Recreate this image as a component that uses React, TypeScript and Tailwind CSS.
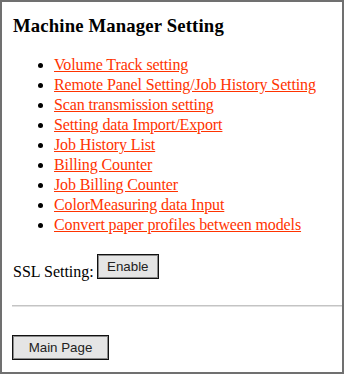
import React from "react";

const links = [
  "Volume Track setting",
  "Remote Panel Setting/Job History Setting",
  "Scan transmission setting",
  "Setting data Import/Export",
  "Job History List",
  "Billing Counter",
  "Job Billing Counter",
  "ColorMeasuring data Input",
  "Convert paper profiles between models",
];

export default function App() {
  return (
    <div
      className="w-[344px] h-[374px] border-2 border-[#707070] bg-white overflow-hidden"
      style={{ fontFamily: '"Liberation Serif", "Times New Roman", serif' }}
    >
      <div className="pl-[10px] pt-[13px]">
        <h3 className="text-[18.72px] leading-[22px] font-bold text-black pl-[1px] tracking-[0.15px]">
          Machine Manager Setting
        </h3>
        <ul className="mt-[18px] pl-[42px] list-disc text-[16px] leading-[20px] tracking-[-0.12px]">
          {links.map((l) => (
            <li key={l} className="marker:text-black">
              <a href="#" className="text-[#ff3300] underline">
                {l}
              </a>
            </li>
          ))}
        </ul>
        <div className="mt-[19px] flex items-start text-[16px] text-black">
          <span className="leading-[20px] mt-[8px] pl-[1px]">SSL Setting:</span>
          <button
            className="ml-[3px] w-[62px] h-[25px] border border-[#111] bg-[#e5e5e5] shadow-[inset_0_0_0_1px_#8a8a8a] text-[13.33px] text-[#222] leading-none"
            style={{ fontFamily: '"Liberation Sans", Arial, sans-serif' }}
          >
            Enable
          </button>
        </div>
        <div className="mt-[23px] h-[2px] border-t border-[#c4c4c4] bg-[#e2e2e2]" />
        <button
          className="mt-[28px] w-[97px] h-[25px] border border-[#111] bg-[#e5e5e5] shadow-[inset_0_0_0_1px_#8a8a8a] text-[13.33px] text-[#222] leading-none"
          style={{ fontFamily: '"Liberation Sans", Arial, sans-serif' }}
        >
          Main Page
        </button>
      </div>
    </div>
  );
}
